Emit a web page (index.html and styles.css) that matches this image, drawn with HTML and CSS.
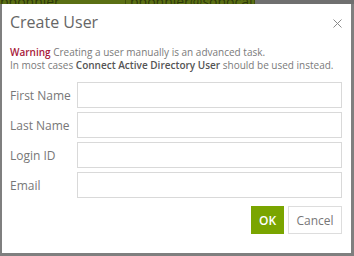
FILE: index.html
```html
<!DOCTYPE html>
<html lang="en">

<head>
    <meta charset="UTF-8">
    <title>Create User</title>
    <link rel="stylesheet" href="styles.css">
</head>

<body>
    <!-- page behind the modal -->
    <div class="backdrop-bar">
        <div class="bar-cell bar-green">pbonnier</div>
        <div class="bar-cell bar-green bar-wide">pbonnier@sohocat</div>
        <div class="bar-cell bar-grey"></div>
    </div>

    <div class="dialog">
        <div class="dialog-header">
            <h2 class="dialog-title">Create User</h2>
            <span class="close-btn">
                <svg width="9" height="9" viewBox="0 0 9 9">
                    <path d="M0.5 0.5 L8.5 8.5 M8.5 0.5 L0.5 8.5" stroke="#8a8a8a" stroke-width="1" fill="none" />
                </svg>
            </span>
        </div>

        <p class="notice">
            <b class="warn">Warning</b> Creating a user manually is an advanced task.<br>
            In most cases <b>Connect Active Directory User</b> should be used instead.
        </p>

        <div class="form">
            <div class="form-row">
                <label for="firstName">First Name</label>
                <input id="firstName" type="text">
            </div>
            <div class="form-row">
                <label for="lastName">Last Name</label>
                <input id="lastName" type="text">
            </div>
            <div class="form-row">
                <label for="loginId">Login ID</label>
                <input id="loginId" type="text">
            </div>
            <div class="form-row">
                <label for="email">Email</label>
                <input id="email" type="text">
            </div>
        </div>

        <div class="button-group">
            <button class="btn btn-ok">OK</button>
            <button class="btn btn-cancel">Cancel</button>
        </div>
    </div>
</body>

</html>
```

FILE: styles.css
```css
body {
    margin: 0;
    height: 256px;
    overflow: hidden;
    background-color: #7f7f7f;
    font-family: 'Open Sans', 'Noto Sans', sans-serif;
    color: #666;
}

.backdrop-bar {
    display: flex;
    height: 4px;
    overflow: hidden;
}

.bar-cell {
    font-size: 14px;
    line-height: 4px;
    color: #2e3a0a;
    overflow: hidden;
    white-space: nowrap;
}

.bar-green {
    background-color: #5b6f14;
    width: 125px;
    border-right: 1px solid #41500c;
}

.bar-wide {
    width: 124px;
    padding-left: 4px;
}

.bar-grey {
    flex: 1;
    background-color: #6f6f6f;
}

.dialog {
    margin: 0 3px 0 2px;
    height: 249px;
    background-color: #fff;
    box-sizing: border-box;
    padding: 0 9px 0 8px;
}

.dialog-header {
    display: flex;
    justify-content: space-between;
    align-items: center;
    height: 36px;
}

.dialog-title {
    margin: 0;
    font-size: 16px;
    font-weight: normal;
    color: #666;
}

.close-btn {
    display: flex;
    margin-top: 2px;
}

.notice {
    margin: 6px 0 0 0;
    font-size: 10px;
    line-height: 13px;
    color: #7a7a7a;
}

.notice b {
    font-weight: 600;
    color: #555;
}

.notice .warn {
    color: #a8193a;
}

.form {
    display: flex;
    flex-direction: column;
    gap: 4px;
    margin-top: 10px;
}

.form-row {
    display: flex;
    align-items: center;
}

.form-row label {
    width: 67px;
    font-size: 12px;
    color: #777;
}

.form-row input {
    flex: 1;
    height: 26px;
    box-sizing: border-box;
    border: 1px solid #d9d9d9;
    margin: 0;
    padding: 0 6px;
    font-family: inherit;
}

.button-group {
    display: flex;
    justify-content: flex-end;
    gap: 4px;
    margin-top: 8px;
}

.btn {
    height: 28px;
    border: none;
    font-family: inherit;
    font-size: 12px;
    cursor: pointer;
    padding: 0;
}

.btn-ok {
    width: 33px;
    background-color: #7aa500;
    color: #fff;
    font-weight: 600;
}

.btn-cancel {
    width: 54px;
    background-color: #fff;
    border: 1px solid #ddd;
    color: #777;
}
```
